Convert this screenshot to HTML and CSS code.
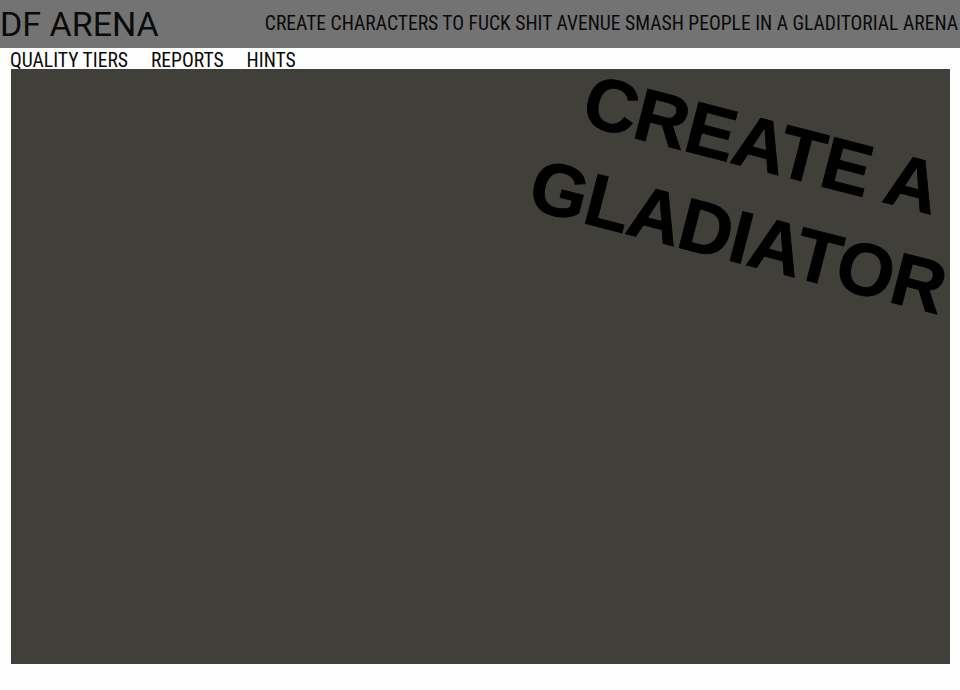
FILE: index.html
```html
<!DOCTYPE html>
<html>
<head>
<meta charset="utf-8">
<link rel="stylesheet" href="styles.css">
</head>
<body>
<header class="top">
  <h1 class="brand">DF ARENA</h1>
  <p class="tagline">CREATE CHARACTERS TO FUCK SHIT AVENUE SMASH PEOPLE IN A GLADITORIAL ARENA</p>
</header>
<nav class="nav">
  <a class="nav-link" href="#">QUALITY TIERS</a>
  <a class="nav-link" href="#">REPORTS</a>
  <a class="nav-link" href="#">HINTS</a>
</nav>
<main class="stage">
  <div class="banner">CREATE A<br>GLADIATOR</div>
</main>
</body>
</html>
```
FILE: styles.css
```css
html, body {
  margin: 0;
  padding: 0;
  background: #fefefe;
}
body {
  font-family: "Roboto Condensed", "Roboto", sans-serif;
  font-stretch: condensed;
  color: #0a0a0a;
}
.top {
  height: 48px;
  background: #737373;
  display: flex;
  align-items: flex-start;
  justify-content: space-between;
  padding-right: 2px;
  white-space: nowrap;
}
.brand {
  margin: 0;
  font-family: "Roboto", sans-serif;
  font-stretch: 90%;
  font-weight: normal;
  font-size: 34px;
  line-height: 48px;
}
.tagline {
  margin: 0;
  font-size: 19.6px;
  line-height: 48px;
}
.nav {
  display: flex;
  align-items: flex-start;
  gap: 23px;
  padding-left: 10px;
  height: 21px;
  white-space: nowrap;
}
.nav-link {
  color: #0a0a0a;
  text-decoration: none;
  font-size: 19.6px;
  line-height: 25px;
}
.stage {
  position: relative;
  margin: 0 10px 0 11px;
  height: 595px;
  background: #403f3a;
  overflow: hidden;
}
.banner {
  position: absolute;
  left: 540px;
  top: -28px;
  width: 460px;
  text-align: center;
  font-family: "Liberation Sans", sans-serif;
  font-stretch: normal;
  font-weight: bold;
  font-size: 74px;
  line-height: 95px;
  letter-spacing: -0.8px;
  color: #000;
  -webkit-text-stroke: 0.8px #000;
  transform: rotate(14.5deg);
  transform-origin: 0 0;
  white-space: nowrap;
}
```
